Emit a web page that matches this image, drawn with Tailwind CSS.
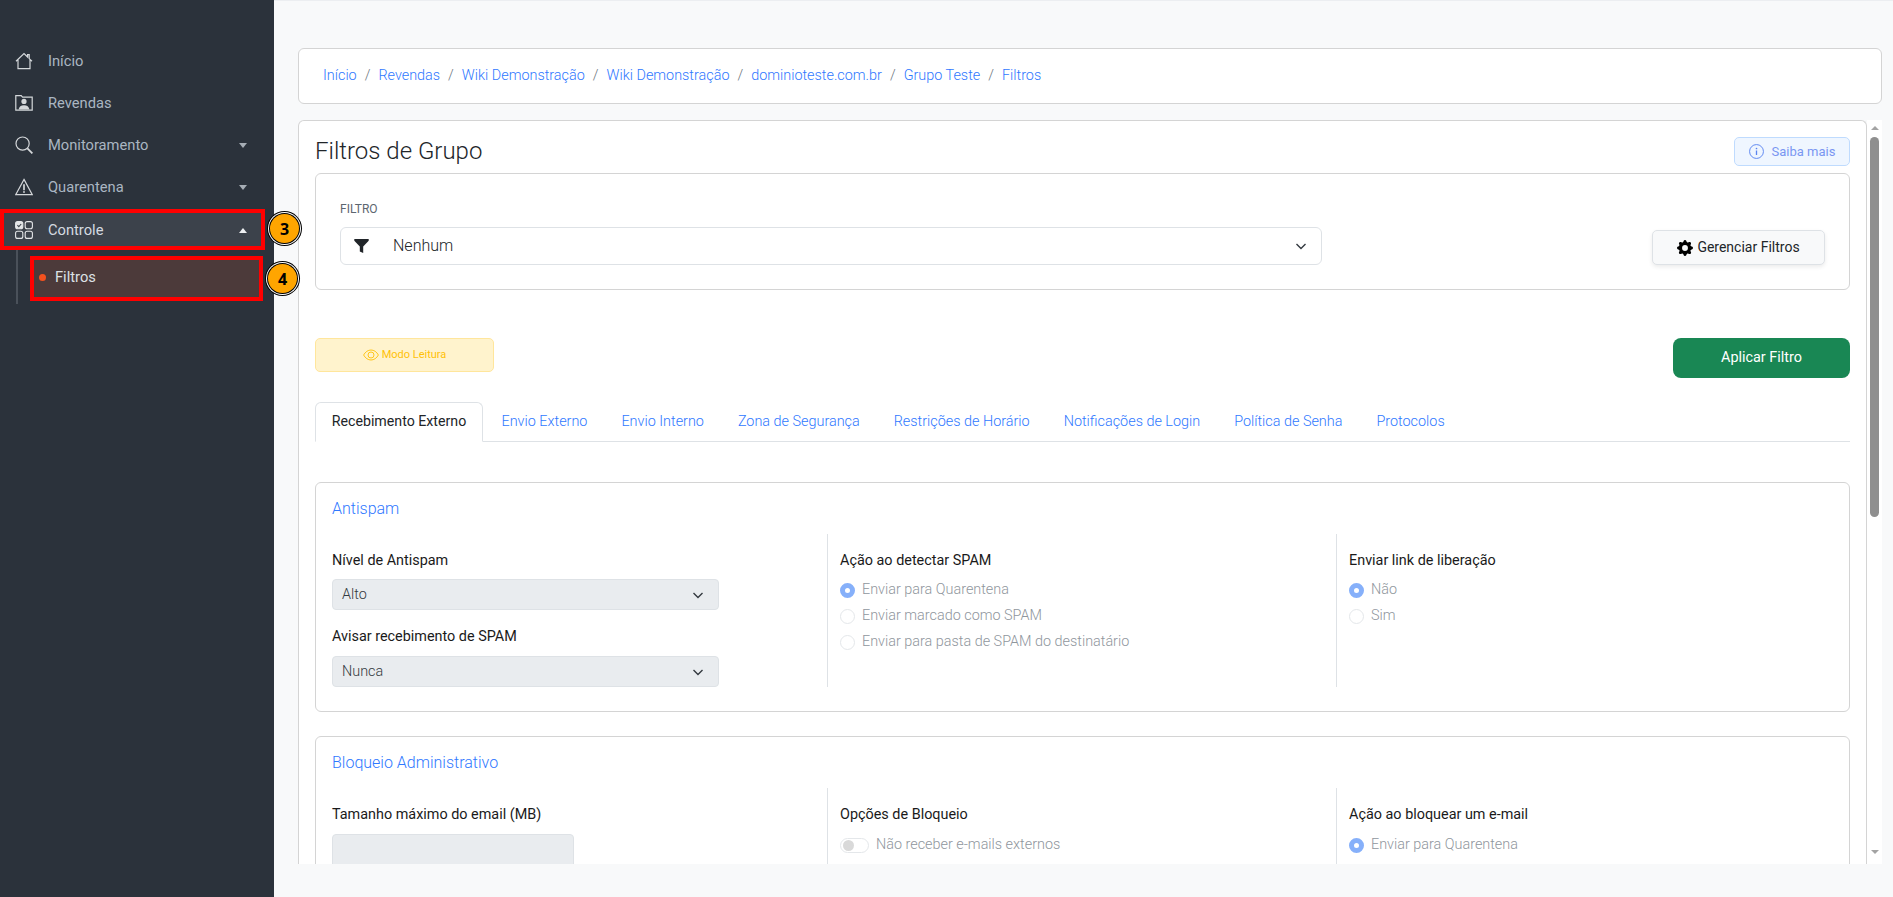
<!DOCTYPE html>
<html lang="pt-BR">
<head>
    <meta charset="UTF-8">
    <meta name="viewport" content="width=device-width, initial-scale=1.0">
    <title>Filtros de Grupo</title>
    <script src="https://cdn.jsdelivr.net/npm/@tailwindcss/browser@4"></script>
</head>
<body class="bg-[#f8f9fa] font-[Roboto,sans-serif] text-[14.4px] text-[#212529]">
<div class="flex h-[897px] overflow-hidden">

    <!-- Sidebar -->
    <aside class="w-[274px] shrink-0 bg-[#2b323b] pt-[39.5px] text-[14.7px] text-[#aab6c2]">
        <a class="flex h-[42.25px] w-[265px] items-center gap-[15px] pl-[15px]">
            <svg class="h-[18px] w-[18px]" viewBox="0 0 18 18" fill="none" stroke="#d4d7da" stroke-width="1.2"><path d="M1 9.2 9 1.6l3.6 3.4V2.6h1.6V6.6L17 9.2M3 7.8V16.600h12V7.800"/></svg>
            <span>Início</span>
        </a>
        <a class="flex h-[42.25px] w-[265px] items-center gap-[15px] pl-[15px]">
            <svg class="h-[18px] w-[18px]" viewBox="0 0 18 18" fill="none" stroke="#d4d7da" stroke-width="1.2"><path d="M.8 16.200V1.600h5.400l1.400 1.600h9.600v13z"/><circle cx="9" cy="7.400" r="2.600" fill="#d4d7da" stroke="none"/><path d="M3.600 15.600c.4-3 2.400-4.400 5.400-4.400s5 1.400 5.400 4.400z" fill="#d4d7da" stroke="none"/></svg>
            <span>Revendas</span>
        </a>
        <a class="flex h-[42.25px] w-[265px] items-center gap-[15px] pl-[15px]">
            <svg class="h-[18px] w-[18px]" viewBox="0 0 18 18" fill="none" stroke="#d4d7da" stroke-width="1.2"><circle cx="7.600" cy="7.600" r="6.600"/><path d="m12.400 12.400 5 5" stroke-width="1.800"/></svg>
            <span class="flex-1">Monitoramento</span>
            <span class="mr-[18px] h-0 w-0 border-x-[4px] border-t-[5px] border-x-transparent border-t-[#a6adb5]"></span>
        </a>
        <a class="flex h-[42.25px] w-[265px] items-center gap-[15px] pl-[15px]">
            <svg class="h-[18px] w-[18px]" viewBox="0 0 18 18" fill="none" stroke="#d4d7da" stroke-width="1.2"><path d="M9 1.400 17.300 16.600H.7z"/><path d="M9 6.200v6" stroke-width="1.700"/><circle cx="9" cy="14" r=".9" fill="#d4d7da" stroke="none"/></svg>
            <span class="flex-1">Quarentena</span>
            <span class="mr-[18px] h-0 w-0 border-x-[4px] border-t-[5px] border-x-transparent border-t-[#a6adb5]"></span>
        </a>

        <!-- Controle (annotated) -->
        <div class="relative z-10 mt-[0.5px] w-[265px]">
            <a class="flex h-[41px] items-center gap-[15px] border-4 border-[#ff0000] bg-[#3c424b] pl-[11px] pt-[1px] text-[#d5dbe1]">
                <svg class="h-[18px] w-[18px]" viewBox="0 0 18 18" fill="none" stroke="#e4e6e8" stroke-width="1.1"><rect x=".6" y=".6" width="7.200" height="7.200" rx="2" fill="#e4e6e8"/><path d="m2.400 4.200 1.400 1.400 2.400-2.600" stroke="#3c424b" stroke-width="1.100"/><rect x="10.200" y=".6" width="7.200" height="7.200" rx="2"/><rect x=".6" y="10.200" width="7.200" height="7.200" rx="2"/><rect x="10.200" y="10.200" width="7.200" height="7.200" rx="2"/></svg>
                <span class="flex-1">Controle</span>
                <span class="mr-[14px] h-0 w-0 border-x-[4px] border-b-[5px] border-x-transparent border-b-[#eef0f2]"></span>
            </a>
            <span class="absolute left-[270px] top-[5px] flex h-[29px] w-[29px] items-center justify-center rounded-full bg-[#ffa500] font-['Open_Sans'] text-[16px] font-bold text-black shadow-[0_0_0_1px_#000,0_0_0_2px_#fff,0_0_0_3px_#000]">3</span>
        </div>

        <!-- Submenu -->
        <div class="relative z-10 ml-[16px] h-[54px] w-[249px] border-l-2 border-[#4a515a] pl-[12px] pt-[6px]">
            <a class="flex h-[45px] w-[233px] items-center border-4 border-[#ff0000] bg-[#4c3a3a] pb-[2px] pl-[5px] text-[#dde1e5]">
                <span class="mr-[9px] h-[7px] w-[7px] rounded-full bg-[#f4511e]"></span>
                <span>Filtros</span>
            </a>
            <span class="absolute left-[250px] top-[14px] flex h-[29px] w-[29px] items-center justify-center rounded-full bg-[#ffa500] font-['Open_Sans'] text-[16px] font-bold text-black shadow-[0_0_0_1px_#000,0_0_0_2px_#fff,0_0_0_3px_#000]">4</span>
        </div>
    </aside>

    <!-- Main -->
    <main class="min-w-0 flex-1 border-t border-[#eceef1] pl-[24px] pr-[11px] pt-[47px]">

        <!-- Breadcrumb -->
        <nav class="mb-[16px] flex h-[56px] items-center gap-[8px] rounded-[6px] border border-[#d4d4d4] bg-white px-[24px] pb-[1px] font-light text-[#2f78ff]">
            <a>Início</a><span class="text-[#6c757d]">/</span>
            <a>Revendas</a><span class="text-[#6c757d]">/</span>
            <a>Wiki Demonstração</a><span class="text-[#6c757d]">/</span>
            <a>Wiki Demonstração</a><span class="text-[#6c757d]">/</span>
            <a>dominioteste.com.br</a><span class="text-[#6c757d]">/</span>
            <a>Grupo Teste</a><span class="text-[#6c757d]">/</span>
            <a>Filtros</a>
        </nav>

        <div class="flex h-[744px]">
            <!-- Card -->
            <section class="h-[744px] min-w-0 flex-1 overflow-hidden rounded-t-[6px] border-x border-t border-[#d4d4d4] bg-white px-[16px] pt-[16px]">
                <div class="mb-[7px] flex h-[29px] items-start justify-between">
                    <h1 class="text-[24px] font-light leading-[28px]">Filtros de Grupo</h1>
                    <a class="flex h-[29px] w-[116px] items-center justify-center gap-[8px] rounded-[5px] border border-[#bfdbfe] bg-[#eff6ff] text-[13px] text-[#7a96f2]">
                        <svg class="h-[15px] w-[15px]" viewBox="0 0 16 16" fill="none" stroke="#5b84f1" stroke-width="1"><circle cx="8" cy="8" r="7.400"/><path d="M8 7v4.600" stroke-width="1.400"/><circle cx="8" cy="4.800" r=".9" fill="#5b84f1" stroke="none"/></svg>
                        <span>Saiba mais</span>
                    </a>
                </div>

                <!-- Filter selector -->
                <div class="flex h-[117px] items-end justify-between rounded-[6px] border border-[#d4d4d4] px-[24px] pb-[24px]">
                    <div>
                        <label class="mb-[9px] block text-[12px] leading-[18px] text-[#5c6670]">FILTRO</label>
                        <div class="flex h-[38px] w-[982px] items-center rounded-[6px] border border-[#dee2e6] pl-[13px] pr-[14px]">
                            <svg class="mr-[24px] h-[14px] w-[15px]" viewBox="0 0 15 14" fill="#212529"><path d="M.3 0h14.400v1.800L9.200 7.400V14L5.800 12.400v-5L.3 1.800z"/></svg>
                            <span class="flex-1 text-[16px] font-light">Nenhum</span>
                            <svg class="h-[12px] w-[12px]" viewBox="0 0 12 12" fill="none" stroke="#343a40" stroke-width="1.400"><path d="m1.500 4 4.500 4.500L10.500 4"/></svg>
                        </div>
                    </div>
                    <button class="flex h-[35px] w-[173px] items-center justify-center gap-[4px] rounded-[5px] border border-[#dee2e6] bg-[#f8f9fa] text-[14px] shadow-[0_2px_4px_rgba(0,0,0,0.08)]">
                        <svg class="h-[16px] w-[16px]" viewBox="0 0 16 16" fill="#000"><path d="M9.405 1.05c-.413-1.4-2.397-1.4-2.81 0l-.1.34a1.464 1.464 0 0 1-2.105.872l-.31-.17c-1.283-.698-2.686.705-1.987 1.987l.169.311c.446.82.023 1.841-.872 2.105l-.34.1c-1.4.413-1.4 2.397 0 2.81l.34.1a1.464 1.464 0 0 1 .872 2.105l-.17.31c-.698 1.283.705 2.686 1.987 1.987l.311-.169a1.464 1.464 0 0 1 2.105.872l.1.34c.413 1.4 2.397 1.4 2.81 0l.1-.34a1.464 1.464 0 0 1 2.105-.872l.31.17c1.283.698 2.686-.705 1.987-1.987l-.169-.311a1.464 1.464 0 0 1 .872-2.105l.34-.1c1.4-.413 1.4-2.397 0-2.81l-.34-.1a1.464 1.464 0 0 1-.872-2.105l.17-.31c.698-1.283-.705-2.686-1.987-1.987l-.311.169a1.464 1.464 0 0 1-2.105-.872l-.1-.34zM8 10.93a2.929 2.929 0 1 1 0-5.86 2.929 2.929 0 0 1 0 5.858z"/></svg>
                        <span>Gerenciar Filtros</span>
                    </button>
                </div>

                <!-- Actions -->
                <div class="mt-[48px] flex h-[40px] items-start justify-between">
                    <div class="flex h-[34px] w-[179px] items-center justify-center gap-[3px] rounded-[5px] border border-[#ffe69c] bg-[#fff3cd] text-[11px] text-[#ffc107]">
                        <svg class="h-[12px] w-[16px]" viewBox="0 0 16 12" fill="none" stroke="#ffc107" stroke-width=".9"><path d="M.6 6C2.400 2.800 5 1 8 1s5.600 1.800 7.400 5C13.600 9.200 11 11 8 11S2.400 9.200.6 6z"/><circle cx="8" cy="6" r="3"/></svg>
                        <span>Modo Leitura</span>
                    </div>
                    <button class="h-[40px] w-[177px] rounded-[8px] bg-[#198754] text-[14.4px] text-white">Aplicar Filtro</button>
                </div>

                <!-- Tabs -->
                <div class="mt-[24px] flex h-[40px] items-stretch gap-[1px] border-b border-[#dee2e6] font-light text-[#2f78ff]">
                    <a class="mb-[-1px] mr-[1px] flex w-[168px] items-center justify-center rounded-t-[6px] border border-[#dee2e6] border-b-white bg-white text-[14.2px] font-normal text-[#212529]">Recebimento Externo</a>
                    <a class="flex items-center px-[16.5px]">Envio Externo</a>
                    <a class="flex items-center px-[16.5px]">Envio Interno</a>
                    <a class="flex items-center px-[16.5px]">Zona de Segurança</a>
                    <a class="flex items-center px-[16.5px]">Restrições de Horário</a>
                    <a class="flex items-center px-[16.5px]">Notificações de Login</a>
                    <a class="flex items-center px-[16.5px]">Política de Senha</a>
                    <a class="flex items-center px-[16.5px]">Protocolos</a>
                </div>

                <!-- Antispam -->
                <div class="mt-[40px] h-[230px] rounded-[6px] border border-[#d4d4d4] px-[16px] pt-[17px]">
                    <h2 class="text-[16px] font-light leading-[18px] text-[#2f78ff]">Antispam</h2>
                    <div class="mt-[16px] grid h-[153px] grid-cols-[495px_509px_1fr]">
                        <div class="pt-[17px]">
                            <label class="block leading-[20px] text-[#1a1a1a]">Nível de Antispam</label>
                            <div class="mt-[8px] flex h-[31px] w-[387px] items-center justify-between rounded-[4px] border border-[#dee2e6] bg-[#e9ecef] pl-[9px] pr-[14px] font-light text-[#343a40]">
                                <span>Alto</span>
                                <svg class="h-[12px] w-[12px]" viewBox="0 0 12 12" fill="none" stroke="#343a40" stroke-width="1.400"><path d="m1.500 4 4.500 4.500L10.500 4"/></svg>
                            </div>
                            <label class="mt-[17px] block leading-[20px] text-[#1a1a1a]">Avisar recebimento de SPAM</label>
                            <div class="mt-[9px] flex h-[31px] w-[387px] items-center justify-between rounded-[4px] border border-[#dee2e6] bg-[#e9ecef] pl-[9px] pr-[14px] font-light text-[#343a40]">
                                <span>Nunca</span>
                                <svg class="h-[12px] w-[12px]" viewBox="0 0 12 12" fill="none" stroke="#343a40" stroke-width="1.400"><path d="m1.500 4 4.500 4.500L10.500 4"/></svg>
                            </div>
                        </div>
                        <div class="border-l border-[#dee2e6] pl-[12px] pt-[17px]">
                            <label class="block leading-[20px] text-[#1a1a1a]">Ação ao detectar SPAM</label>
                            <div class="mt-[6px] font-light text-[#8f969d]">
                                <div class="flex h-[26px] items-center gap-[7px]"><span class="h-[15px] w-[15px] rounded-full border-[5px] border-[#86b0fa] bg-white"></span>Enviar para Quarentena</div>
                                <div class="flex h-[26px] items-center gap-[7px]"><span class="h-[15px] w-[15px] rounded-full border border-[#e4e7ea] bg-white"></span>Enviar marcado como SPAM</div>
                                <div class="flex h-[26px] items-center gap-[7px]"><span class="h-[15px] w-[15px] rounded-full border border-[#e4e7ea] bg-white"></span>Enviar para pasta de SPAM do destinatário</div>
                            </div>
                        </div>
                        <div class="border-l border-[#dee2e6] pl-[12px] pt-[17px]">
                            <label class="block leading-[20px] text-[#1a1a1a]">Enviar link de liberação</label>
                            <div class="mt-[6px] font-light text-[#8f969d]">
                                <div class="flex h-[26px] items-center gap-[7px]"><span class="h-[15px] w-[15px] rounded-full border-[5px] border-[#86b0fa] bg-white"></span>Não</div>
                                <div class="flex h-[26px] items-center gap-[7px]"><span class="h-[15px] w-[15px] rounded-full border border-[#e4e7ea] bg-white"></span>Sim</div>
                            </div>
                        </div>
                    </div>
                </div>

                <!-- Bloqueio Administrativo -->
                <div class="mt-[24px] h-[230px] rounded-[6px] border border-[#d4d4d4] px-[16px] pt-[17px]">
                    <h2 class="text-[16px] font-light leading-[18px] text-[#2f78ff]">Bloqueio Administrativo</h2>
                    <div class="mt-[16px] grid h-[153px] grid-cols-[495px_509px_1fr]">
                        <div class="pt-[17px]">
                            <label class="block leading-[20px] text-[#1a1a1a]">Tamanho máximo do email (MB)</label>
                            <div class="mt-[9px] h-[34px] w-[242px] rounded-[4px] border border-[#dee2e6] bg-[#e9ecef]"></div>
                        </div>
                        <div class="border-l border-[#dee2e6] pl-[12px] pt-[17px]">
                            <label class="block leading-[20px] text-[#1a1a1a]">Opções de Bloqueio</label>
                            <div class="mt-[7px] flex h-[26px] items-center gap-[7px] font-light text-[#8f969d]">
                                <span class="flex h-[15px] w-[29px] items-center rounded-full border border-[#e4e7ea] pl-[2px]"><span class="h-[11px] w-[11px] rounded-full bg-[#d9d9d9]"></span></span>
                                Não receber e-mails externos
                            </div>
                        </div>
                        <div class="border-l border-[#dee2e6] pl-[12px] pt-[17px]">
                            <label class="block leading-[20px] text-[#1a1a1a]">Ação ao bloquear um e-mail</label>
                            <div class="mt-[7px] font-light text-[#8f969d]">
                                <div class="flex h-[26px] items-center gap-[7px]"><span class="h-[15px] w-[15px] rounded-full border-[5px] border-[#86b0fa] bg-white"></span>Enviar para Quarentena</div>
                                <div class="flex h-[26px] items-center gap-[7px]"><span class="h-[15px] w-[15px] rounded-full border border-[#e4e7ea] bg-white"></span></div>
                            </div>
                        </div>
                    </div>
                </div>
            </section>

            <!-- Scrollbar -->
            <div class="flex w-[15px] shrink-0 flex-col items-center bg-white pt-[6px]">
                <span class="h-0 w-0 border-x-[4px] border-b-[4px] border-x-transparent border-b-[#a3a3a3]"></span>
                <span class="mt-[7px] h-[380px] w-[9px] rounded-full bg-[#8f8f8f]"></span>
                <span class="mt-[333px] h-0 w-0 border-x-[4px] border-t-[4px] border-x-transparent border-t-[#a3a3a3]"></span>
            </div>
        </div>
    </main>
</div>
</body>
</html>
